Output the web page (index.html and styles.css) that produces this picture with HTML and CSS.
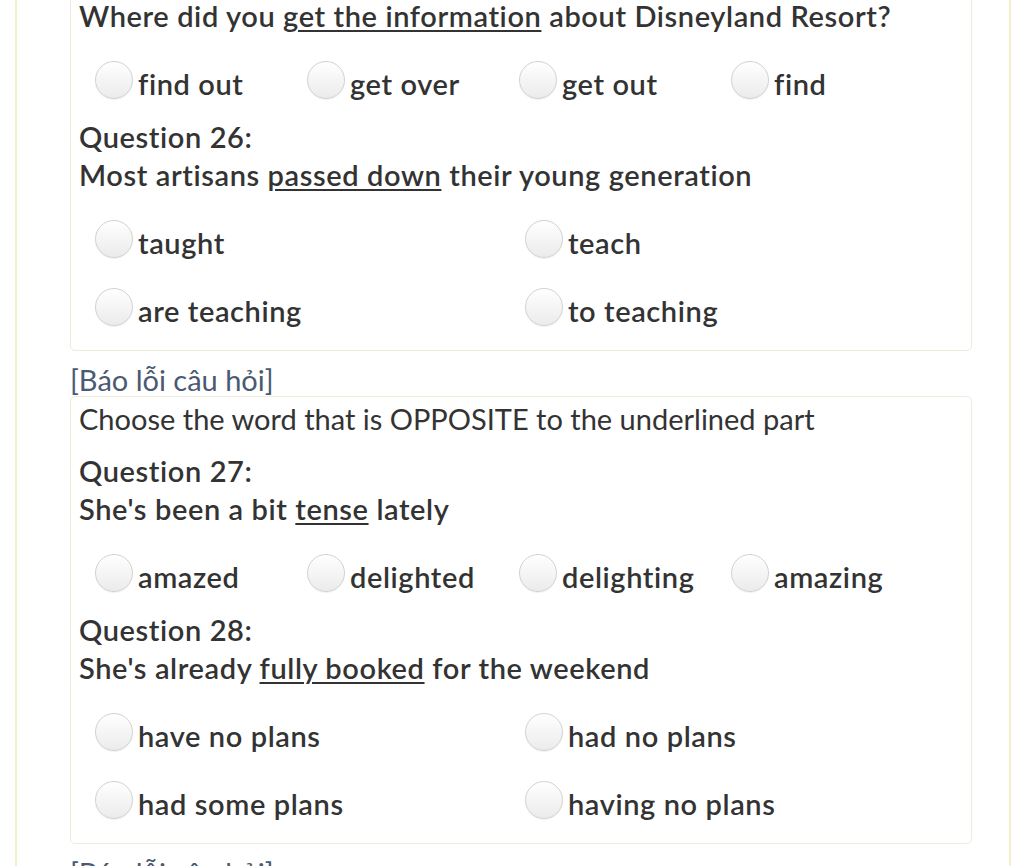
FILE: index.html
```html
<!DOCTYPE html>
<html>
<head>
<meta charset="utf-8">
<link rel="stylesheet" href="styles.css">
</head>
<body>
<div class="wrap">
  <div class="card first">
    <div class="qtext">Where did you <u>get the information</u> about Disneyland Resort?</div>
    <div class="opts opts4">
      <label class="opt"><span class="radio"></span><span class="lbl">find out</span></label>
      <label class="opt"><span class="radio"></span><span class="lbl">get over</span></label>
      <label class="opt"><span class="radio"></span><span class="lbl">get out</span></label>
      <label class="opt"><span class="radio"></span><span class="lbl">find</span></label>
    </div>
    <div class="qhead">Question 26:</div>
    <div class="qtext">Most artisans <u>passed down</u> their young generation</div>
    <div class="opts opts2">
      <label class="opt"><span class="radio"></span><span class="lbl">taught</span></label>
      <label class="opt"><span class="radio"></span><span class="lbl">teach</span></label>
      <label class="opt"><span class="radio"></span><span class="lbl">are teaching</span></label>
      <label class="opt"><span class="radio"></span><span class="lbl">to teaching</span></label>
    </div>
  </div>
  <div class="report">[Báo lỗi câu hỏi]</div>
  <div class="card">
    <div class="instr">Choose the word that is OPPOSITE to the underlined part</div>
    <div class="qhead">Question 27:</div>
    <div class="qtext">She's been a bit <u>tense</u> lately</div>
    <div class="opts opts4">
      <label class="opt"><span class="radio"></span><span class="lbl">amazed</span></label>
      <label class="opt"><span class="radio"></span><span class="lbl">delighted</span></label>
      <label class="opt"><span class="radio"></span><span class="lbl">delighting</span></label>
      <label class="opt"><span class="radio"></span><span class="lbl">amazing</span></label>
    </div>
    <div class="qhead">Question 28:</div>
    <div class="qtext">She's already <u>fully booked</u> for the weekend</div>
    <div class="opts opts2">
      <label class="opt"><span class="radio"></span><span class="lbl">have no plans</span></label>
      <label class="opt"><span class="radio"></span><span class="lbl">had no plans</span></label>
      <label class="opt"><span class="radio"></span><span class="lbl">had some plans</span></label>
      <label class="opt"><span class="radio"></span><span class="lbl">having no plans</span></label>
    </div>
  </div>
  <div class="report">[Báo lỗi câu hỏi]</div>
</div>
</body>
</html>
```
FILE: styles.css
```css
html, body {
  margin: 0;
  padding: 0;
  background: #ffffff;
  overflow: hidden;
}
body {
  font-family: Lato, "Noto Sans", sans-serif;
  color: #333333;
  font-size: 29px;
}
.wrap {
  margin: 0 13px 0 15px;
  border-left: 2px solid #f3efc6;
  border-right: 2px solid #f3efc6;
  min-height: 900px;
  padding: 0 37px 0 53px;
}
.card {
  border: 1px solid #efecdc;
  border-radius: 5px;
  padding: 4px 8px 4px 8px;
}
.card.first {
  margin-top: -7px;
  border-top-left-radius: 0;
  border-top-right-radius: 0;
}
.qtext, .qhead {
  font-weight: 600;
  line-height: 36px;
  padding-bottom: 2px;
  letter-spacing: 0.6px;
  white-space: nowrap;
}
.qtext u {
  text-decoration-thickness: 2px;
  text-underline-offset: 3px;
}
.instr {
  font-weight: 400;
  line-height: 36px;
  padding-bottom: 2px;
  margin-bottom: 14px;
}
.opts {
  display: grid;
  padding: 25px 0 20px 16px;
  row-gap: 30px;
}
.opts4 {
  grid-template-columns: repeat(4, 212px);
}
.opts2 {
  grid-template-columns: repeat(2, 430px);
}
.opt {
  display: flex;
  align-items: flex-start;
  gap: 5px;
  height: 38px;
}
.radio {
  flex: none;
  width: 36px;
  height: 36px;
  border-radius: 50%;
  border: 1px solid #d2d2d2;
  background: linear-gradient(#ffffff, #ebebeb);
  box-shadow: 0 1px 1px rgba(0,0,0,0.06);
}
.lbl {
  font-weight: 600;
  line-height: 38px;
  letter-spacing: 0.6px;
  margin-top: 4px;
  white-space: nowrap;
}
.report {
  color: #4a5a72;
  line-height: 32px;
  margin-top: 13px;
  font-weight: 400;
}
```
